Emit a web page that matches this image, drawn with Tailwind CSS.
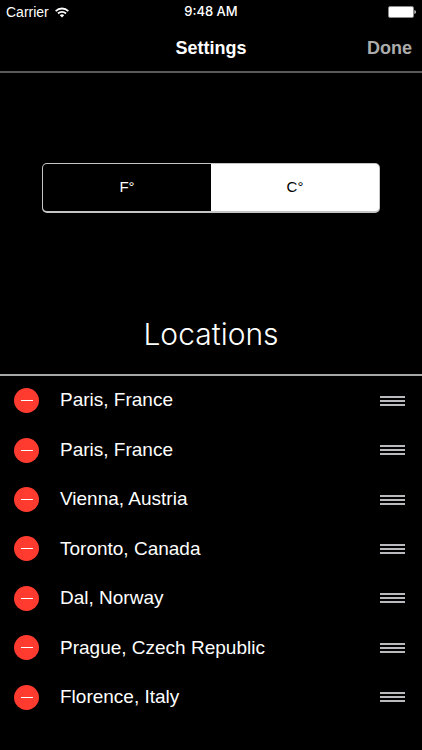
<!DOCTYPE html>
<html lang="en">
<head>
<meta charset="utf-8">
<meta name="viewport" content="width=device-width, initial-scale=1">
<title>Settings</title>
<script src="https://cdn.jsdelivr.net/npm/@tailwindcss/browser@4"></script>
</head>
<body class="flex min-h-screen flex-col bg-black font-['Liberation_Sans',Arial,sans-serif] text-white">
<header class="border-b-2 border-[#5b595c]">
  <div class="grid h-6 grid-cols-3 items-center px-[6px] text-[14px]">
    <div class="flex items-center gap-[6px]">
      <span>Carrier</span>
      <svg class="h-[11px] w-[14px]" viewBox="0 0 14 11" fill="none" stroke="#fff" stroke-width="1.8" role="img" aria-label="Wi-Fi">
        <path d="M.7 4.1a8.9 8.9 0 0 1 12.6 0M3 6.5a5.7 5.7 0 0 1 8 0"/>
        <path d="M4.8 8.3a3.1 3.1 0 0 1 4.4 0L7 10.6z" fill="#fff" stroke="none"/>
      </svg>
    </div>
    <time class="text-center font-['Inter','Liberation_Sans',sans-serif] text-[13px] font-medium">9:48 AM</time>
    <svg class="h-3 w-7 justify-self-end" viewBox="0 0 28 12" role="img" aria-label="Battery full">
      <rect x=".5" y=".5" width="25" height="11" rx="1.5" fill="#fff" stroke="#8a8a8a"/>
      <path d="M26.500 4v4q1.300-.6 1.300-2t-1.300-2z" fill="#fff"/>
    </svg>
  </div>
  <div class="grid h-[47px] grid-cols-3 items-center px-[10px] pt-[2px] text-[18px] font-bold">
    <h1 class="col-start-2 text-center">Settings</h1>
    <button type="button" class="justify-self-end text-[#acacac]">Done</button>
  </div>
</header>
<main class="flex grow flex-col">
  <div role="radiogroup" aria-label="Temperature unit" class="mx-[42px] mt-[90px] grid h-[50px] grid-cols-2 rounded-[5px] bg-[#c4c6c6] p-px pb-[2px] text-[15px]">
    <label class="flex items-center justify-center rounded-l-[4px] bg-black has-checked:bg-white has-checked:text-black"><input class="size-0 appearance-none" type="radio" name="unit" value="f">F°</label>
    <label class="flex items-center justify-center rounded-r-[4px] bg-black has-checked:bg-white has-checked:text-black"><input class="size-0 appearance-none" type="radio" name="unit" value="c" checked>C°</label>
  </div>
  <h2 class="mt-[100px] h-[63px] border-b-2 border-[#a5a8a7] text-center font-['Inter','Liberation_Sans',sans-serif] text-[30px] leading-[42px] font-light">Locations</h2>
  <ul class="flex grow flex-col pb-7 text-[19px]">
    <li class="flex flex-1 items-center gap-[21px] pr-[17px] pl-[14px]">
      <button type="button" aria-label="Delete Paris" class="flex size-[25px] items-center justify-center rounded-full bg-[#ff3b30]"><span class="h-px w-3 bg-white"></span></button>
      <span class="grow">Paris, France</span>
      <button type="button" aria-label="Reorder Paris" class="flex w-[25px] flex-col gap-[2px]"><span class="h-[2px] bg-[#b9b9be]"></span><span class="h-[2px] bg-[#b9b9be]"></span><span class="h-[2px] bg-[#b9b9be]"></span></button>
    </li>
    <li class="flex flex-1 items-center gap-[21px] pr-[17px] pl-[14px]">
      <button type="button" aria-label="Delete Paris" class="flex size-[25px] items-center justify-center rounded-full bg-[#ff3b30]"><span class="h-px w-3 bg-white"></span></button>
      <span class="grow">Paris, France</span>
      <button type="button" aria-label="Reorder Paris" class="flex w-[25px] flex-col gap-[2px]"><span class="h-[2px] bg-[#b9b9be]"></span><span class="h-[2px] bg-[#b9b9be]"></span><span class="h-[2px] bg-[#b9b9be]"></span></button>
    </li>
    <li class="flex flex-1 items-center gap-[21px] pr-[17px] pl-[14px]">
      <button type="button" aria-label="Delete Vienna" class="flex size-[25px] items-center justify-center rounded-full bg-[#ff3b30]"><span class="h-px w-3 bg-white"></span></button>
      <span class="grow">Vienna, Austria</span>
      <button type="button" aria-label="Reorder Vienna" class="flex w-[25px] flex-col gap-[2px]"><span class="h-[2px] bg-[#b9b9be]"></span><span class="h-[2px] bg-[#b9b9be]"></span><span class="h-[2px] bg-[#b9b9be]"></span></button>
    </li>
    <li class="flex flex-1 items-center gap-[21px] pr-[17px] pl-[14px]">
      <button type="button" aria-label="Delete Toronto" class="flex size-[25px] items-center justify-center rounded-full bg-[#ff3b30]"><span class="h-px w-3 bg-white"></span></button>
      <span class="grow">Toronto, Canada</span>
      <button type="button" aria-label="Reorder Toronto" class="flex w-[25px] flex-col gap-[2px]"><span class="h-[2px] bg-[#b9b9be]"></span><span class="h-[2px] bg-[#b9b9be]"></span><span class="h-[2px] bg-[#b9b9be]"></span></button>
    </li>
    <li class="flex flex-1 items-center gap-[21px] pr-[17px] pl-[14px]">
      <button type="button" aria-label="Delete Dal" class="flex size-[25px] items-center justify-center rounded-full bg-[#ff3b30]"><span class="h-px w-3 bg-white"></span></button>
      <span class="grow">Dal, Norway</span>
      <button type="button" aria-label="Reorder Dal" class="flex w-[25px] flex-col gap-[2px]"><span class="h-[2px] bg-[#b9b9be]"></span><span class="h-[2px] bg-[#b9b9be]"></span><span class="h-[2px] bg-[#b9b9be]"></span></button>
    </li>
    <li class="flex flex-1 items-center gap-[21px] pr-[17px] pl-[14px]">
      <button type="button" aria-label="Delete Prague" class="flex size-[25px] items-center justify-center rounded-full bg-[#ff3b30]"><span class="h-px w-3 bg-white"></span></button>
      <span class="grow">Prague, Czech Republic</span>
      <button type="button" aria-label="Reorder Prague" class="flex w-[25px] flex-col gap-[2px]"><span class="h-[2px] bg-[#b9b9be]"></span><span class="h-[2px] bg-[#b9b9be]"></span><span class="h-[2px] bg-[#b9b9be]"></span></button>
    </li>
    <li class="flex flex-1 items-center gap-[21px] pr-[17px] pl-[14px]">
      <button type="button" aria-label="Delete Florence" class="flex size-[25px] items-center justify-center rounded-full bg-[#ff3b30]"><span class="h-px w-3 bg-white"></span></button>
      <span class="grow">Florence, Italy</span>
      <button type="button" aria-label="Reorder Florence" class="flex w-[25px] flex-col gap-[2px]"><span class="h-[2px] bg-[#b9b9be]"></span><span class="h-[2px] bg-[#b9b9be]"></span><span class="h-[2px] bg-[#b9b9be]"></span></button>
    </li>
  </ul>
</main>
</body>
</html>
